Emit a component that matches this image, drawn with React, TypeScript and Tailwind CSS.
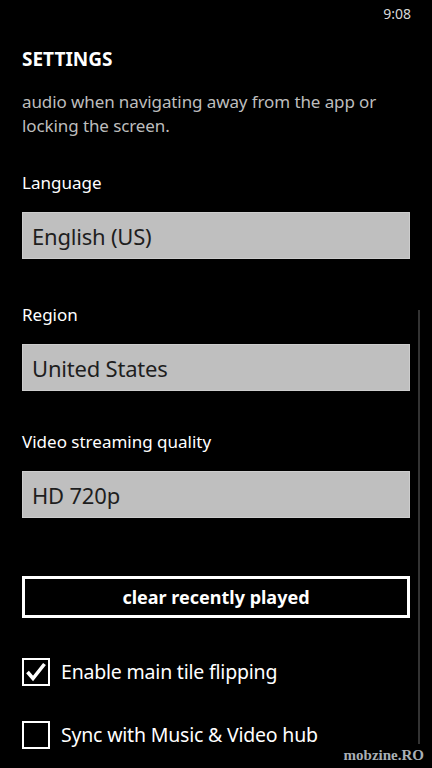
import React from "react";

const font = { fontFamily: '"Noto Sans", "Open Sans", sans-serif' };

function Field({ label, value, mt }: { label: string; value: string; mt: string }) {
  return (
    <div className={mt}>
      <div className="text-[17px] leading-[24px] text-white">{label}</div>
      <div className="mt-[17px] h-[47px] bg-[#bfbfbf] border border-[#cdcdcd] flex items-center pl-[9px]">
        <span className="text-[22px] leading-none text-[#1e1e1e] tracking-[-0.2px]">{value}</span>
      </div>
    </div>
  );
}

function Check({ checked, label, mt }: { checked: boolean; label: string; mt: string }) {
  return (
    <div className={`flex items-center gap-[11px] ${mt}`}>
      <div className="w-[28px] h-[28px] border-[2.5px] border-white flex items-center justify-center">
        {checked && (
          <svg width="22" height="22" viewBox="0 0 22 22">
            <polyline points="2.5,11 8,17.5 19.5,3" fill="none" stroke="white" strokeWidth="3.6" />
          </svg>
        )}
      </div>
      <span className="text-[19.5px] leading-none text-white tracking-[-0.2px]">{label}</span>
    </div>
  );
}

export default function App() {
  return (
    <div className="relative w-[432px] h-[768px] bg-black overflow-hidden" style={font}>
      <div className="flex justify-end pr-[21px] pt-[4px] text-[14px] leading-[20px] text-[#d8d8d8]">9:08</div>
      <div className="px-[22px]">
        <div className="mt-[21px] text-[19px] leading-[28px] font-bold text-white">SETTINGS</div>
        <div className="mt-[17px] text-[17px] leading-[24px] text-[#bdbdbd] tracking-[-0.1px]">
          audio when navigating away from the app or locking the screen.
        </div>
        <Field label="Language" value="English (US)" mt="mt-[33px]" />
        <Field label="Region" value="United States" mt="mt-[44px]" />
        <Field label="Video streaming quality" value="HD 720p" mt="mt-[39px]" />
        <button className="mt-[58px] w-full h-[42px] border-[3px] border-white flex items-center justify-center text-[18px] font-bold text-white leading-none">
          clear recently played
        </button>
        <Check checked label="Enable main tile flipping" mt="mt-[40px]" />
        <Check checked={false} label="Sync with Music & Video hub" mt="mt-[35px]" />
      </div>
      <div className="absolute left-[418px] top-[310px] w-[2px] h-[434px] bg-[#333333]" />
      <div
        className="absolute right-[8px] bottom-[5px] text-[15px] leading-none font-bold text-[#a9b0b6]"
        style={{ fontFamily: '"Liberation Serif", serif' }}
      >
        mobzine.RO
      </div>
    </div>
  );
}
